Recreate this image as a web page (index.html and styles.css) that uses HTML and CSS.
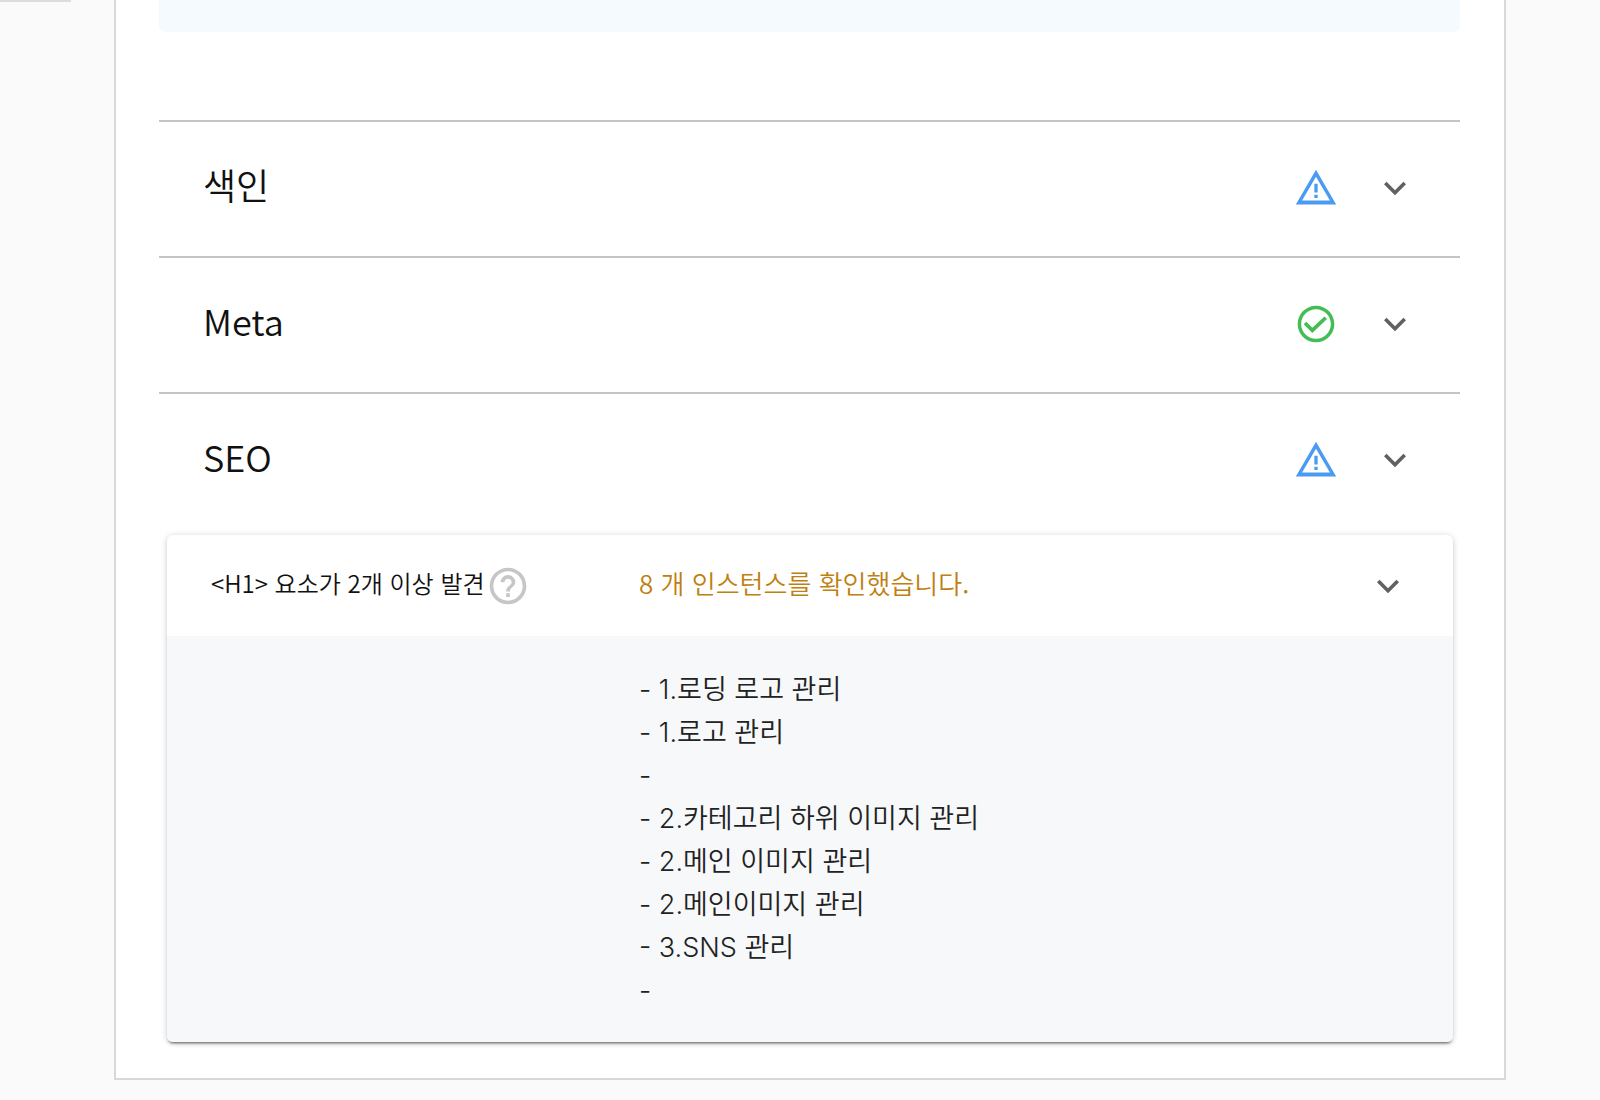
FILE: index.html
```html
<!DOCTYPE html>
<html lang="ko">
<head>
    <meta charset="UTF-8">
    <meta name="viewport" content="width=device-width, initial-scale=1.0">
    <title>SEO</title>
    <link rel="stylesheet" href="styles.css">
</head>
<body>
    <svg class="sprite" aria-hidden="true">
        <symbol id="icon-warning" viewBox="0 0 24 24">
            <path d="M12 5.8L19.6 18.8H4.4L12 5.8M12 2L1 21h22L12 2zm.9 13.7h-1.8v1.8h1.8v-1.8zm0-6h-1.8v4.8h1.8v-4.8z"/>
        </symbol>
        <symbol id="icon-check" viewBox="0 0 24 24">
            <path d="M12 2C6.48 2 2 6.48 2 12s4.48 10 10 10 10-4.48 10-10S17.52 2 12 2zm0 18.1c-4.47 0-8.1-3.63-8.1-8.1S7.53 3.9 12 3.9s8.1 3.63 8.1 8.1-3.63 8.1-8.1 8.1zm4.6-12.2L10 14.1l-3.3-3.3-1.4 1.4L10 16.9l8-7.6z"/>
        </symbol>
        <symbol id="icon-help" viewBox="0 0 24 24">
            <path d="M11 18h2v-2h-2v2zm1-16C6.48 2 2 6.48 2 12s4.48 10 10 10 10-4.48 10-10S17.52 2 12 2zm0 18c-4.41 0-8-3.59-8-8s3.59-8 8-8 8 3.59 8 8-3.59 8-8 8zm0-14c-2.21 0-4 1.79-4 4h2c0-1.1.9-2 2-2s2 .9 2 2c0 2-3 1.75-3 5h2c0-2.25 3-2.5 3-5 0-2.21-1.79-4-4-4z"/>
        </symbol>
        <symbol id="icon-expand" viewBox="0 0 24 24">
            <path d="M16.59 8.59L12 13.17 7.41 8.59 6 10l6 6 6-6z"/>
        </symbol>
    </svg>

    <div class="page">
        <aside class="side"></aside>

        <main class="card">
            <div class="notice"></div>

            <button type="button" class="row">
                <span class="row-title">색인</span>
                <svg class="icon warning"><use href="#icon-warning"/></svg>
                <svg class="icon expand"><use href="#icon-expand"/></svg>
            </button>

            <button type="button" class="row">
                <span class="row-title">Meta</span>
                <svg class="icon check"><use href="#icon-check"/></svg>
                <svg class="icon expand"><use href="#icon-expand"/></svg>
            </button>

            <button type="button" class="row" aria-expanded="true">
                <span class="row-title">SEO</span>
                <svg class="icon warning"><use href="#icon-warning"/></svg>
                <svg class="icon expand"><use href="#icon-expand"/></svg>
            </button>

            <section class="panel">
                <button type="button" class="panel-head" aria-expanded="true">
                    <span class="panel-label">
                        <span class="panel-text">&lt;H1&gt; 요소가 2개 이상 발견</span>
                        <svg class="icon help"><use href="#icon-help"/></svg>
                    </span>
                    <span class="panel-result panel-text">8 개 인스턴스를 확인했습니다.</span>
                    <svg class="icon expand"><use href="#icon-expand"/></svg>
                </button>
                <ul class="panel-list">
                    <li>- 1.로딩 로고 관리</li>
                    <li>- 1.로고 관리</li>
                    <li>-</li>
                    <li>- 2.카테고리 하위 이미지 관리</li>
                    <li>- 2.메인 이미지 관리</li>
                    <li>- 2.메인이미지 관리</li>
                    <li>- 3.SNS 관리</li>
                    <li>-</li>
                </ul>
            </section>
        </main>
    </div>
</body>
</html>
```

FILE: styles.css
```css
* {
    box-sizing: border-box;
}

body {
    font-family: "Noto Sans CJK KR", sans-serif;
    font-weight: 350;
    background-color: #fafafa;
    color: #111;
    margin: 0;
}

button {
    font: inherit;
    color: inherit;
    background: none;
    border: none;
    margin: 0;
    width: 100%;
    text-align: left;
    cursor: pointer;
}

.sprite {
    display: none;
}

.page {
    display: flex;
    align-items: flex-start;
    gap: 43px;
    padding-right: 94px;
}

.side {
    width: 71px;
    border-bottom: 2px solid #dcdcdc;
}

.card {
    flex: 1;
    background-color: #fff;
    border: 2px solid #d8d8d8;
    border-top: none;
    padding: 0 44px 36px 43px;
}

.notice {
    height: 32px;
    margin-bottom: 88px;
    background-color: #f4fafd;
    border-radius: 0 0 6px 6px;
}

.row {
    display: flex;
    align-items: center;
    height: 136px;
    padding: 0 43px 2px 44px;
    border-top: 2px solid #c4c4c4;
}

.row-title {
    flex: 1;
    padding-bottom: 8px;
    font-size: 36px;
    line-height: 52px;
}

.icon {
    width: 44px;
    height: 44px;
    flex: none;
    fill: currentColor;
}

.warning {
    color: #4b9af3;
}

.check {
    color: #43bd55;
}

.expand {
    color: #616161;
}

.row .expand {
    margin-left: 35px;
}

.panel {
    margin: 7px 7px 0 8px;
    border-radius: 6px;
    background-color: #fff;
    box-shadow: 0 3px 3px -2px rgba(0, 0, 0, 0.6), 0 1px 6px rgba(0, 0, 0, 0.2);
}

.panel-head {
    display: grid;
    grid-template-columns: 428px 1fr 44px;
    align-items: center;
    height: 101px;
    padding: 0 43px 0 44px;
}

.panel-label {
    display: flex;
    align-items: center;
    gap: 1px;
    font-size: 24px;
}

.panel-text {
    padding-bottom: 6px;
}

.help {
    color: #c6c6c6;
}

.panel-result {
    font-size: 26px;
    color: #c07f10;
}

.panel-list {
    list-style: none;
    margin: 0;
    padding: 32px 44px 30px 472px;
    background-color: #f6f8fa;
    border-radius: 0 0 6px 6px;
    font-family: Inter, "Noto Sans CJK KR", sans-serif;
    font-size: 27px;
    line-height: 43px;
    color: #222;
}
```
